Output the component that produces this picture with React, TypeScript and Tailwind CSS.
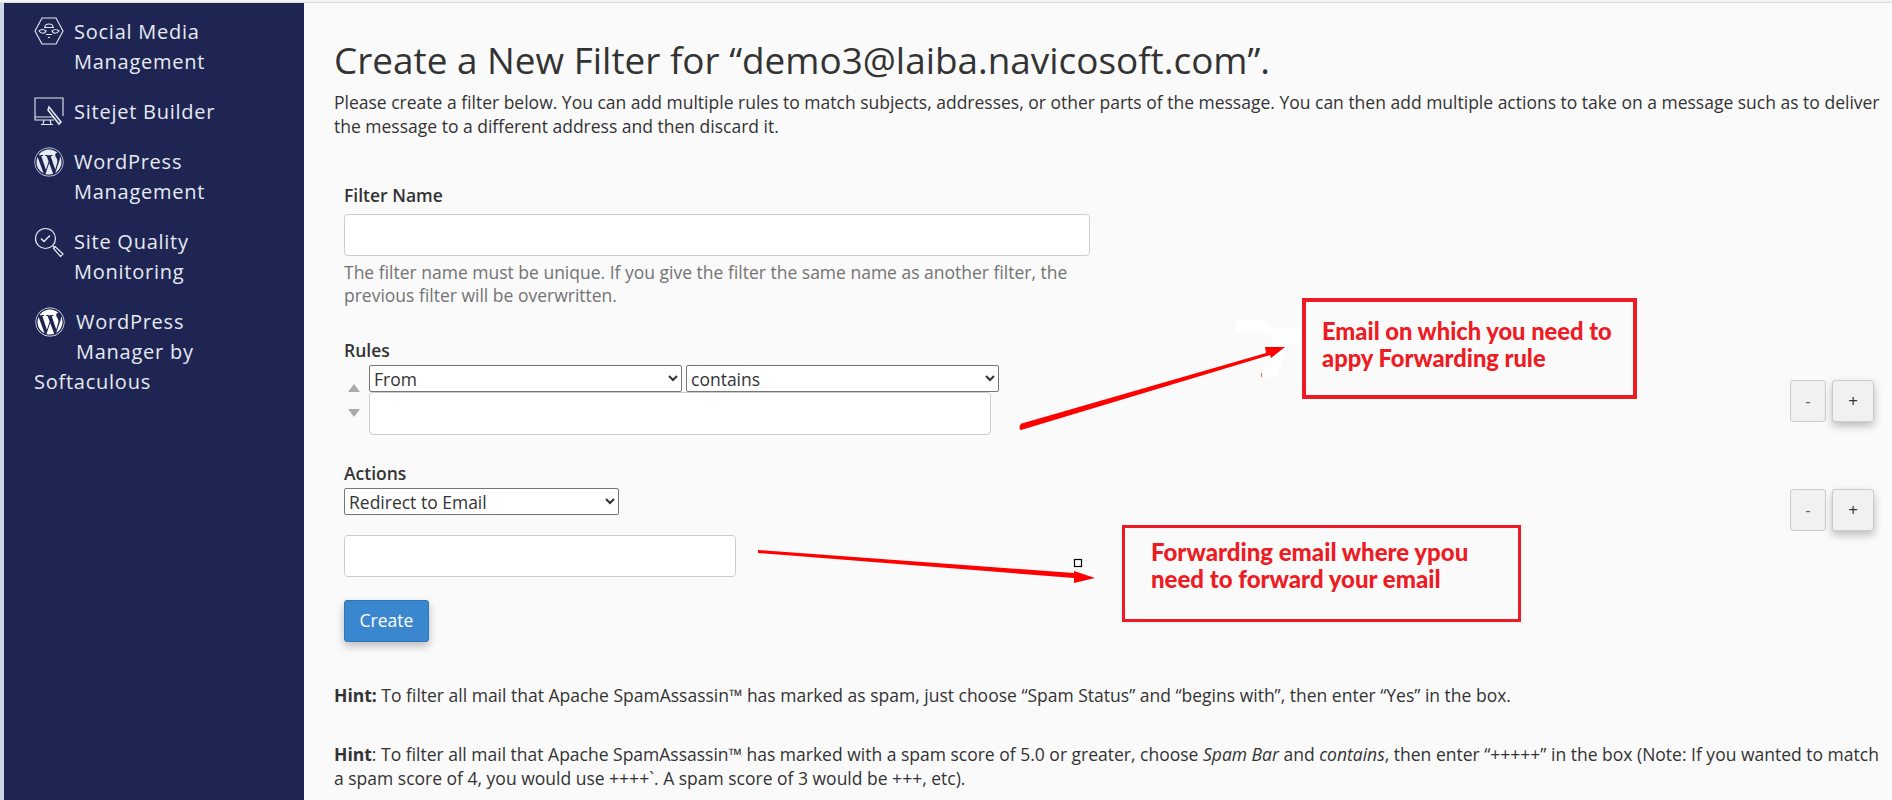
import React from "react";
import { FaWordpress } from "react-icons/fa";

const font = { fontFamily: '"Open Sans", sans-serif' };

function HexIcon() {
  return (
    <svg width="30" height="28" viewBox="0 0 30 28" fill="none" stroke="#e6eaf2" strokeWidth="1.1" className="shrink-0">
      <path d="M8 1h14l7 13-7 13H8L1 14z" />
      <path d="M5 14c2-2 5-2 7 0-1 3-5 3-7 0zM25 14c-2-2-5-2-7 0 1 3 5 3 7 0z" />
      <path d="M11 10c0-4 8-4 8 0M10 10.500h10M12 17.500h6M14 20.500h2" />
    </svg>
  );
}

function MonitorIcon() {
  return (
    <svg width="30" height="30" viewBox="0 0 30 30" fill="none" stroke="#e6eaf2" strokeWidth="1.1" className="shrink-0">
      <path d="M20 20H1V1h28v18" />
      <path d="M1 20v3h19M10 23l-1 4M16 23l1 4M7 27.500h12" />
      <path d="M15 10l12 15-2 2L14 13z" strokeWidth="1.500" />
    </svg>
  );
}

function WpIcon({ color }: { color: string }) {
  return <FaWordpress size={30} color={color} className="shrink-0" />;
}

function SearchCheckIcon() {
  return (
    <svg width="30" height="30" viewBox="0 0 30 30" fill="none" stroke="#e6eaf2" strokeWidth="1.200" className="shrink-0">
      <circle cx="11.500" cy="11.500" r="10" />
      <path d="M7 11.500l3 3 6-6" strokeWidth="1.500" />
      <path d="M19 19l2 2M21 19.500l8 7.500-2.500 2.500-7-8z" />
    </svg>
  );
}

function NavItem({ icon, lines }: { icon: React.ReactNode; lines: string[] }) {
  return (
    <div className="flex gap-[10px] text-[20px] leading-[30px] tracking-[0.75px] text-[#e6eaf2]">
      {icon}
      <div>
        {lines.map((l) => (
          <div key={l}>{l}</div>
        ))}
      </div>
    </div>
  );
}

function Sidebar() {
  return (
    <aside className="flex w-[300px] shrink-0 flex-col gap-[20px] self-stretch bg-[#1f2552] pl-[30px] pt-[14px]">
      <NavItem icon={<HexIcon />} lines={["Social Media", "Management"]} />
      <NavItem icon={<MonitorIcon />} lines={["Sitejet Builder"]} />
      <NavItem icon={<WpIcon color="#e6eaf2" />} lines={["WordPress", "Management"]} />
      <NavItem icon={<SearchCheckIcon />} lines={["Site Quality", "Monitoring"]} />
      <div className="text-[20px] leading-[30px] tracking-[0.75px] text-[#e6eaf2]">
        <div className="flex gap-[11px] pl-[1px]">
          <WpIcon color="#ffffff" />
          <div>
            <div>WordPress</div>
            <div>Manager by</div>
          </div>
        </div>
        <div>Softaculous</div>
      </div>
    </aside>
  );
}

function Select({ label, width }: { label: string; width: string }) {
  return (
    <select
      defaultValue={label}
      className={`h-[27px] appearance-auto rounded-[2px] border border-[#767676] bg-white text-[17.5px] leading-[20px] text-[#333333] ${width}`}
    >
      <option>{label}</option>
    </select>
  );
}

function StepButtons({ className }: { className: string }) {
  return (
    <div className={`absolute right-[18px] flex gap-[6px] ${className}`}>
      <button className="h-[42px] w-[36px] rounded-[3px] border border-[#cccccc] bg-[#f1f1f1] text-[17px] text-[#666666]">-</button>
      <button className="h-[42px] w-[42px] rounded-[3px] border border-[#cccccc] bg-[#f1f1f1] text-[17px] text-[#333333] shadow-[0_4px_8px_rgba(0,0,0,0.25)]">+</button>
    </div>
  );
}

function Label({ children }: { children: React.ReactNode }) {
  return <div className="text-[17.5px] font-semibold leading-[23px] text-[#333333]">{children}</div>;
}

function Input({ width }: { width: string }) {
  return <input className={`block h-[42px] rounded-[4px] border border-[#cccccc] bg-white ${width}`} />;
}

function Overlay() {
  return (
    <>
      <svg className="pointer-events-none absolute left-0 top-0" width="1892" height="800">
        <path d="M1236 320h26l10 8 31 0v14l-18 5-2 13-8 17h-13l1-9 7-13 3-13-4-9h-33z" fill="#ffffff" />
        <path d="M1020 424L1266 353l-1-6 20 0-14 11-1-3-249 75c-2 0-2-4 0-6z" fill="#ff0000" />
        <path d="M758 550l316 23 0-2 21 7-21 5 0-5-316-25z" fill="#ff0000" />
        <rect x="1261" y="373" width="1" height="4" fill="#ee5555" />
        <rect x="1074.500" y="559.500" width="7" height="7" fill="#ffffff" stroke="#000000" strokeWidth="1.200" />
      </svg>
      <div className="absolute left-[1302px] top-[298px] h-[101px] w-[335px] border-[4px] border-[#ed1c24] pl-[16px] pt-[16px] font-['Lato'] text-[23.700px] font-black leading-[27px] text-[#ed1c24]">
        Email on which you need to
        <br />
        appy Forwarding rule
      </div>
      <div className="absolute left-[1122px] top-[525px] h-[97px] w-[399px] border-[3px] border-[#ed1c24] pl-[26px] pt-[10px] font-['Lato'] text-[24px] font-black leading-[27px] text-[#ed1c24]">
        Forwarding email where ypou
        <br />
        need to forward your email
      </div>
      <StepButtons className="top-[380px]" />
      <StepButtons className="top-[489px]" />
    </>
  );
}

export default function App() {
  return (
    <div className="relative h-[800px] w-[1892px] overflow-hidden bg-[#fafafa]" style={font}>
      <div className="h-[3px] border-b border-[#dddddd] bg-[#f4f4f4]" />
      <div className="flex h-[797px]">
        <div className="w-[4px] shrink-0 bg-[#ccd6e6]" />
        <Sidebar />
        <main className="min-w-0 flex-1 pl-[30px] pr-[10px] pt-[32px] text-[17.5px] leading-[24px] text-[#333333]">
          <h1 className="text-[36.900px] leading-[50px]">Create a New Filter for “demo3@laiba.navicosoft.com”.</h1>
          <p className="mt-[5px]">
            Please create a filter below. You can add multiple rules to match subjects, addresses, or other parts of the message. You can then add multiple actions to take on a message such as to deliver the message to a different address and then discard it.
          </p>
          <form className="pl-[10px] pt-[46px]">
            <Label>Filter Name</Label>
            <Input width="mt-[7px] w-[746px]" />
            <p className="mt-[5px] w-[746px] leading-[23px] text-[#737373]">
              The filter name must be unique. If you give the filter the same name as another filter, the previous filter will be overwritten.
            </p>
            <div className="mt-[32px]">
              <Label>Rules</Label>
              <div className="mt-[3px] flex">
                <div className="flex w-[25px] flex-col items-start gap-[17px] pl-[3px] pt-[19px] text-[#999999]">
                  <svg width="14" height="8" viewBox="0 0 14 8"><path d="M7 0l6 8H1z" fill="#aaaaaa" /></svg>
                  <svg width="14" height="8" viewBox="0 0 14 8"><path d="M7 8L1 0h12z" fill="#aaaaaa" /></svg>
                </div>
                <div>
                  <div className="flex gap-[4px]">
                    <Select label="From" width="w-[313px]" />
                    <Select label="contains" width="w-[313px]" />
                  </div>
                  <Input width="h-[43px] w-[622px]" />
                </div>
              </div>
            </div>
            <div className="mt-[27px]">
              <Label>Actions</Label>
              <div className="mt-[3px]">
                <Select label="Redirect to Email" width="w-[275px]" />
              </div>
              <Input width="mt-[20px] w-[392px]" />
              <button type="button" className="mt-[23px] block h-[42px] w-[85px] rounded-[3px] border border-[#2f75b5] bg-[#3a87d0] pb-[2px] text-white shadow-[0_4px_8px_rgba(0,0,0,0.25)]">
                Create
              </button>
            </div>
          </form>
          <p className="mt-[41px]">
            <b>Hint:</b> To filter all mail that Apache SpamAssassin™ has marked as spam, just choose “Spam Status” and “begins with”, then enter “Yes” in the box.
          </p>
          <p className="mt-[35px]">
            <b>Hint</b>: To filter all mail that Apache SpamAssassin™ has marked with a spam score of 5.0 or greater, choose <i>Spam Bar</i> and <i>contains</i>, then enter “+++++” in the box (Note: If you wanted to match a spam score of 4, you would use ++++`. A spam score of 3 would be +++, etc).
          </p>
        </main>
      </div>
      <Overlay />
    </div>
  );
}
